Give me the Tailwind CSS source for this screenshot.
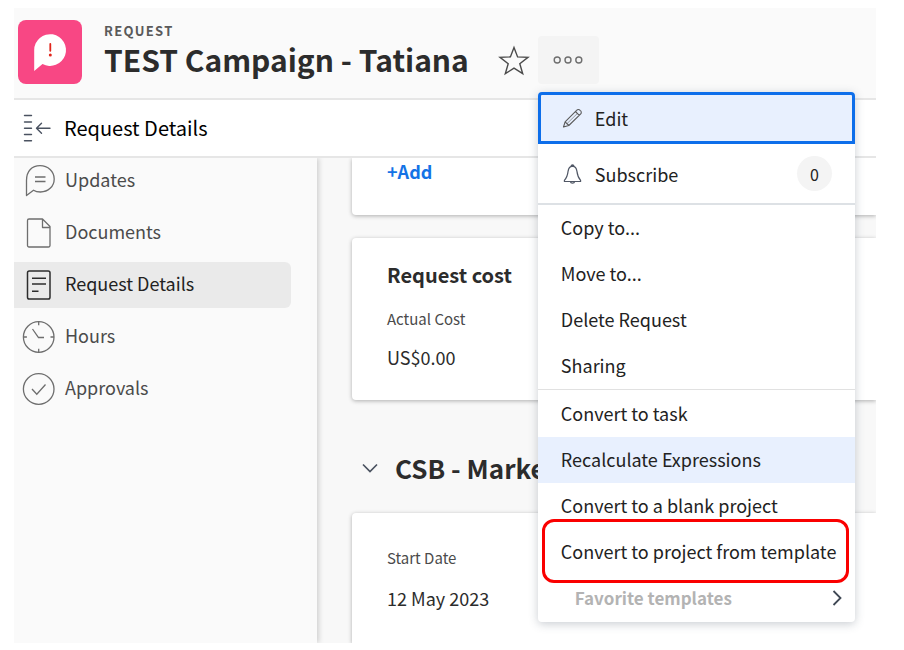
<!DOCTYPE html>
<html lang="en">
<head>
<meta charset="utf-8">
<meta name="viewport" content="width=device-width, initial-scale=1">
<title>TEST Campaign - Tatiana</title>
<script src="https://cdn.jsdelivr.net/npm/@tailwindcss/browser@4"></script>
</head>
<body class="bg-white font-['Noto_Sans_CJK_SC','Noto_Sans',sans-serif] text-[#2c2c2c]">
<div class="flex h-screen flex-col overflow-hidden pt-2 pr-7 pb-[7px] pl-3.5">

  <header class="relative z-20 flex shrink-0 items-center border-b-2 border-[#e6e6e6] bg-[#fafafa] pt-3 pb-3.5 pl-1">
    <svg class="size-16 shrink-0" viewBox="0 0 64 64" aria-hidden="true">
      <rect width="64" height="64" rx="8" fill="#f84784"/>
      <path d="M16.200 51V30a15.900 15.900 0 1 1 8.300 14Z" fill="#fff"/>
      <path d="M32.300 24v6.800" stroke="#e1251b" stroke-width="1.800" stroke-linecap="round"/>
      <circle cx="32.300" cy="34.900" r="1.500" fill="#e1251b"/>
    </svg>
    <div class="ml-[22px] pb-0.5">
      <p class="text-[13px] leading-4 font-bold tracking-widest text-[#5a5a5a]">REQUEST</p>
      <h1 class="text-[30px] leading-10 font-bold whitespace-nowrap">TEST Campaign - Tatiana</h1>
    </div>
    <div class="ml-[29px] flex items-center gap-2 self-end">
      <button type="button" aria-label="Add to favorites">
        <svg class="size-8" viewBox="0 0 32 32" fill="none" stroke="#4b4b4b" stroke-width="1.400" stroke-linejoin="miter"><path d="M16 3.500l3.600 9.400 10.400.5-8.200 6.400 2.900 9.900L16 24.200l-8.700 5.500 2.900-9.900L2 13.400l10.400-.5Z"/></svg>
      </button>
      <div class="relative">
        <button type="button" aria-label="More actions" aria-expanded="true" class="flex h-12 w-[61px] items-center justify-center rounded bg-[#f4f4f4]">
          <svg class="h-3 w-8" viewBox="0 0 32 12" fill="none" stroke="#6e6e6e" stroke-width="1.400"><circle cx="5.200" cy="6" r="3"/><circle cx="16" cy="6" r="3"/><circle cx="26.800" cy="6" r="3"/></svg>
        </button>

        <div role="menu" class="absolute top-full left-0 mt-2 flex w-[317px] flex-col rounded bg-white pb-px text-[18px] leading-6 text-[#222] shadow-[0_2px_10px_rgba(60,75,95,0.28)]">
          <button role="menuitem" type="button" class="flex h-[52px] items-center rounded-t border-3 border-[#0d6eea] bg-[#e8f0fe] pl-5 text-left">
            <svg class="mr-2.5 size-6" viewBox="0 0 24 24" fill="none" stroke="#5a5a5a" stroke-width="1.100" stroke-linejoin="round"><path d="M2.500 21l1.600-5.200L15.600 4.300a2.400 2.400 0 0 1 3.500 0l.4.400a2.400 2.400 0 0 1 0 3.500L7.800 19.500ZM4.100 15.800l3.700 3.700M14.400 5.500l3.900 3.900"/><path d="M16 7.800L6 17.600" stroke-width=".6"/></svg>
            Edit
          </button>
          <button role="menuitem" type="button" class="flex h-[61px] items-center border-b-2 border-[#dde1e5] px-[23px] text-left">
            <svg class="mr-2.5 size-6" viewBox="0 0 24 24" fill="none" stroke="#505765" stroke-width="1.200" stroke-linejoin="round"><path d="M10.200 4.200a1.300 1.300 0 1 1 2.600 0M11.500 4.100c-2.800.3-4 2.100-4.400 5-.5 4.300-1.200 6.500-3.700 9.200v1.200h16.200v-1.200c-2.500-2.700-3.200-4.900-3.700-9.200C15.500 6.200 14.300 4.400 11.500 4.100ZM9.400 19.700c.3 2 3.900 2 4.200 0"/></svg>
            Subscribe
            <span class="ml-auto flex size-[35px] items-center justify-center rounded-full bg-[#f4f4f4] text-[16px]">0</span>
          </button>
          <button role="menuitem" type="button" class="h-[46px] px-[23px] pb-0.5 text-left">Copy to...</button>
          <button role="menuitem" type="button" class="h-[46px] px-[23px] pb-0.5 text-left">Move to...</button>
          <button role="menuitem" type="button" class="h-[46px] px-[23px] pb-0.5 text-left">Delete Request</button>
          <button role="menuitem" type="button" class="h-[46px] px-[23px] pb-0.5 text-left">Sharing</button>
          <div class="flex flex-col border-t border-[#e1e1e1] pt-px">
            <button role="menuitem" type="button" class="h-[46px] px-[23px] pb-0.5 text-left">Convert to task</button>
            <button role="menuitem" type="button" class="h-[46px] bg-[#e8f0fe] px-[23px] pb-0.5 text-left">Recalculate Expressions</button>
            <button role="menuitem" type="button" class="h-[46px] px-[23px] pb-0.5 text-left">Convert to a blank project</button>
            <button role="menuitem" type="button" class="relative h-[46px] px-[23px] pb-0.5 text-left whitespace-nowrap">Convert to project from template
              <span class="pointer-events-none absolute -top-2.5 right-1.5 -bottom-2 left-1 rounded-xl border-3 border-[#fa0000]"></span>
            </button>
            <button role="menuitem" type="button" class="flex h-[46px] items-center justify-between pr-2.5 pl-[37px] text-left text-[17px] font-bold text-[#b3b3b3]">Favorite templates
              <svg class="size-4" viewBox="0 0 16 16" fill="none" stroke="#3f4854" stroke-width="1.800"><path d="M4.500 1l7 7-7 7"/></svg>
            </button>
          </div>
        </div>
      </div>
    </div>
  </header>

  <div class="flex shrink-0 items-center border-b-2 border-[#e6e6e6] py-3.5 pl-2">
    <button type="button" aria-label="Collapse panel">
      <svg class="h-7 w-[30px]" viewBox="0 0 30 28" fill="none" stroke="#4a5260" stroke-width="1.400" stroke-linecap="round" stroke-linejoin="round"><path d="M2.500 1.500h7M2.500 8h7M2.500 14.200h7M2.500 20.500h7M2.500 26.700h7M28 14.200H15M19.500 9.200L14.500 14.200l5 5"/></svg>
    </button>
    <h2 class="ml-3 text-[20px] leading-7 text-black">Request Details</h2>
  </div>

  <div class="flex min-h-0 flex-1 overflow-hidden bg-[#f8f8f8]">
    <nav class="relative z-10 flex w-[303px] shrink-0 flex-col gap-1.5 bg-[#fafafa] text-[18px] leading-6 text-[#4b4b4b] shadow-[2px_0_5px_rgba(0,0,0,0.16)]">
      <a href="#" class="flex h-[46px] items-center gap-[11px] pb-0.5 pl-2">
        <svg class="size-8 overflow-visible" viewBox="0 0 32 32" fill="none" stroke="#6e6e6e" stroke-width="1.300" stroke-linejoin="round"><path d="M4.500 31.500V16.500C4.500 7 10 1.700 18 1.700c8 0 14.200 5.500 14.200 13.200S26 28 18.500 28c-2.700 0-5-.5-7-1.800ZM13 13h10.500M13 17.500h10.500"/></svg>
        <span class="pb-0.5">Updates</span></a>
      <a href="#" class="flex h-[46px] items-center gap-[11px] pb-0.5 pl-2">
        <svg class="size-8" viewBox="0 0 32 32" fill="none" stroke="#6e6e6e" stroke-width="1.300" stroke-linejoin="round"><path d="M20.500 3H7a1.500 1.500 0 0 0-1.500 1.500v25A1.500 1.500 0 0 0 7 31h19.500a1.500 1.500 0 0 0 1.500-1.500V10.500ZM20.500 3v8.500H28"/></svg>
        <span class="pb-0.5">Documents</span></a>
      <a href="#" aria-current="page" class="mr-[26px] flex h-[46px] items-center gap-[11px] rounded-r-md bg-[#eaeaea] pb-0.5 pl-2 text-[#222]">
        <svg class="size-8" viewBox="0 0 32 32" fill="none" stroke="#2c2c2c" stroke-width="1.500"><rect x="5.500" y="3" width="22.500" height="28" rx="1.800"/><path d="M10 10.200h14M10 16h14M10 23.200h6.500"/></svg>
        <span class="pb-0.5">Request Details</span></a>
      <a href="#" class="flex h-[46px] items-center gap-[11px] pb-0.5 pl-2">
        <svg class="size-8 overflow-visible" viewBox="0 0 32 32" fill="none" stroke="#6e6e6e" stroke-width="1.300"><circle cx="16.700" cy="17" r="15.300"/><path d="M16.700 1.700v3.500M16.700 28.800v3.500M1.400 17h3.500M28.500 17H32M10.500 9l6 8.500H22"/></svg>
        <span class="pb-0.5">Hours</span></a>
      <a href="#" class="flex h-[46px] items-center gap-[11px] pb-0.5 pl-2">
        <svg class="size-8 overflow-visible" viewBox="0 0 32 32" fill="none" stroke="#6e6e6e" stroke-width="1.300"><circle cx="16.700" cy="17" r="15.300"/><path d="M10 17l4.800 5.200L23.500 12.500"/></svg>
        <span class="pb-0.5">Approvals</span></a>
    </nav>

    <main class="flex min-w-0 flex-1 flex-col overflow-hidden pl-[35px]">
      <section class="rounded-bl bg-white px-[35px] pb-[31px] shadow-[0_1px_4px_rgba(0,0,0,0.3)]">
        <button type="button" class="text-[18px] leading-[26px] font-bold text-[#1473e6]">+Add</button>
      </section>
      <section class="mt-[23px] rounded-l bg-white px-[35px] pt-[23px] pb-[29px] shadow-[0_1px_4px_rgba(0,0,0,0.3)]">
        <h3 class="text-[20px] leading-7 font-bold">Request cost</h3>
        <p class="mt-4 text-[15px] leading-7 text-[#4b4b4b]">Actual Cost</p>
        <p class="mt-2.5 text-[18px] leading-7">US$0.00</p>
      </section>
      <div class="mt-12 flex items-center pl-2.5">
        <svg class="size-4 shrink-0" viewBox="0 0 16 16" fill="none" stroke="#4a5260" stroke-width="1.700"><path d="M1 4.500l7 7 7-7"/></svg>
        <h2 class="ml-[17px] text-[26px] leading-10 font-bold whitespace-nowrap">CSB - Marketing</h2>
      </div>
      <section class="mt-[25px] flex-1 rounded-tl bg-white px-[35px] pt-[31px] shadow-[0_1px_4px_rgba(0,0,0,0.3)]">
        <p class="text-[15px] leading-7 text-[#4b4b4b]">Start Date</p>
        <p class="mt-3 text-[18px] leading-7">12 May 2023</p>
      </section>
    </main>
  </div>
</div>
</body>
</html>
